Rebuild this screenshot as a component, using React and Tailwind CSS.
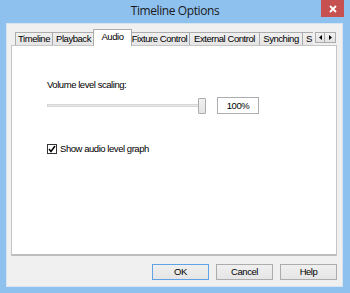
export default function App() {
  const ui = "font-['Liberation_Sans',Arial,sans-serif] text-[9.5px] tracking-[-0.45px] text-black leading-[12px]";
  const tab = "h-[13px] border-t border-r border-[#acacac] bg-gradient-to-b from-[#f0f0f0] to-[#e5e5e5] flex items-center justify-center whitespace-nowrap shrink-0";
  const btn = "w-[57px] h-[16px] border bg-gradient-to-b from-[#f0f0f0] to-[#e5e5e5] flex items-center justify-center";
  return (
    <div className="w-[350px] h-[293px] bg-[#8fc1ef] flex flex-col">
      <div className="h-[23px] grid grid-cols-[1fr_auto_1fr] items-start shrink-0">
        <div />
        <div className="pt-[3px] font-['Open_Sans',sans-serif] text-[12px] leading-[16px] tracking-[-0.4px] text-[#1a1a1a]">
          Timeline Options
        </div>
        <div className="flex justify-end pr-[6px]">
          <div className="w-[23px] h-[17px] bg-[#c75050] flex items-center justify-center">
            <svg width="8" height="8" viewBox="0 0 8 8">
              <path d="M1 1 L7 7 M7 1 L1 7" stroke="#fff" strokeWidth="1.8" />
            </svg>
          </div>
        </div>
      </div>
      <div className={`flex-1 ml-[6px] mr-[7px] mb-[6px] bg-[#f0f0f0] border border-[#d6e3f0] flex flex-col pl-[4px] pr-[5px] pt-[5px] pb-[6px] ${ui}`}>
        <div className="relative z-10 h-[16px] flex items-end pl-[4px]">
          <div className={`${tab} w-[38px] border-l`}>Timeline</div>
          <div className={`${tab} w-[42px]`}>Playback</div>
          <div className="w-[39px] h-[17px] -mb-[1px] -mx-[2px] relative z-10 bg-white border-t border-l border-r border-[#acacac] flex items-start justify-center pt-[1px] shrink-0">
            Audio
          </div>
          <div className={`${tab} w-[60px]`}>Fixture Control</div>
          <div className={`${tab} w-[70px]`}>External Control</div>
          <div className={`${tab} w-[43px]`}>Synching</div>
          <div className="h-[13px] w-[10px] border-t border-[#acacac] bg-gradient-to-b from-[#f0f0f0] to-[#e5e5e5] flex items-center pl-[3px] whitespace-nowrap shrink-0">
            S
          </div>
          <div className="flex ml-[2px] mb-[2px]">
            <div className="w-[10px] h-[11px] border border-[#acacac] bg-gradient-to-b from-[#f2f2f2] to-[#e3e3e3] flex items-center justify-center">
              <svg width="3" height="5" viewBox="0 0 3 5"><path d="M3 0 L0 2.5 L3 5 Z" fill="#000" /></svg>
            </div>
            <div className="w-[11px] h-[11px] border border-l-0 border-[#acacac] bg-gradient-to-b from-[#f2f2f2] to-[#e3e3e3] flex items-center justify-center">
              <svg width="3" height="5" viewBox="0 0 3 5"><path d="M0 0 L3 2.5 L0 5 Z" fill="#000" /></svg>
            </div>
          </div>
        </div>
        <div className="h-[211px] bg-white border border-[#c6c6c6] border-b-[#bdbdbd] border-b-2 flex flex-col pl-[35px] pt-[33px]">
          <div>Volume level scaling:</div>
          <div className="mt-[6px] h-[17px] flex items-center">
            <div className="w-[153px] h-[3px] bg-[#e7eaea] border border-[#d6d6d6]" />
            <div className="w-[8px] h-[16px] -ml-[2px] rounded-[1px] border border-[#acacac] bg-gradient-to-b from-[#f0f0f0] to-[#e5e5e5]" />
            <div className="ml-[11px] w-[42px] h-[17px] border border-[#abadb3] bg-white flex items-center justify-center">
              100%
            </div>
          </div>
          <div className="mt-[29px] flex items-center">
            <div className="w-[10px] h-[10px] border border-[#333] bg-white flex items-center justify-center">
              <svg width="8" height="8" viewBox="0 0 8 8">
                <path d="M1 4 L3 6.5 L7 1" stroke="#000" strokeWidth="1.5" fill="none" />
              </svg>
            </div>
            <div className="ml-[3px]">Show audio level graph</div>
          </div>
        </div>
        <div className="mt-auto flex justify-end gap-[7px]">
          <div className={`${btn} border-[#5fa3e6]`}>OK</div>
          <div className={`${btn} border-[#acacac]`}>Cancel</div>
          <div className={`${btn} border-[#acacac]`}>Help</div>
        </div>
      </div>
    </div>
  );
}
